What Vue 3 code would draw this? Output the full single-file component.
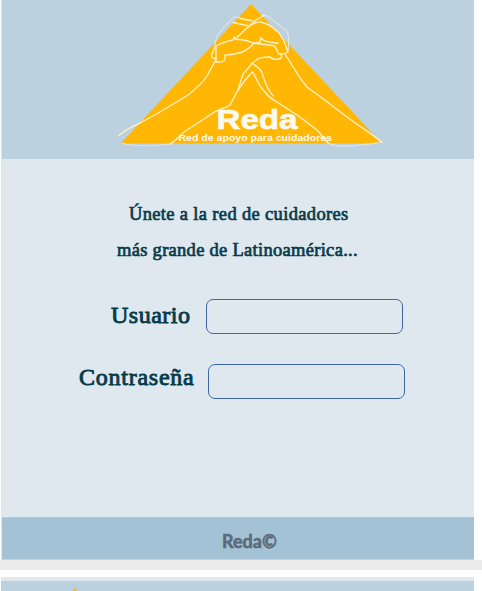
<script setup>
import { ref } from 'vue'

const username = ref('')
const password = ref('')
</script>

<template>
  <div class="page">
    <main class="card">
      <header class="header">
        <svg class="logo" viewBox="116 0 270 150" role="img" aria-label="Reda">
          <path class="peak" d="M251 4 L382 143.5 H120.5 Z" />
          <g class="outline">
            <path class="edge" d="M214.5 46 L217 36 L221 31 L226 25 L233 18 Q236 16 241 18.5 L246 20 M262 15.5 Q266 14 270 18 L283 28 Q289 32 288.5 38 L288.5 50" />
            <path class="edge" d="M122 143 C133 147 156 146 170 144" />
            <path class="edge" d="M328 143 C339 149 360 145 382 142.4" />
            <path d="M119 135.7 C122 131 132 127 140 123 L160 112 L188 95 Q202 84 207 76 L215.7 60" />
            <path d="M170 144 C178 140 180 134 187 130 L210 115 C219 108 225 109 230 105 L238 90 L243 74 L251.7 64 Q257 58 262 57.5 L270 57" />
            <path d="M238 90 L246 79 L252.7 71.7 C257 80 260 88 265 92 C269 98 272 99 277 102 L297 115 L317 130 L328 143" />
            <path d="M251.7 63 C256 66 260 68 261 71 C265 79 265 88 273.5 96" />
            <path d="M382 142.4 C371 133 360 127 347 117 L322 98 L307 87 Q300 79 295 70 L285 54" />
            <path d="M233 22.5 L248 25.7 M240 18.5 L252 20.7" />
            <path d="M235 39 L247 28 L256 20 L264 15.3 M247 28 Q256 21 261 22 Q268 24 272 27 L279 33 L284 41 L288 52 Q284 55 278 53.5 Q276 46 273 45.5 L254 43.3" />
            <path d="M216 46 Q223 42 233 40 L234 37 L236 39.5 Q245 39 254 43.3 Q248 50 241 52.5 Q231 55 225 55 Q226 62 221 62 L216 62 Z" />
            <path d="M215 47 L211.5 55 Q211 59 216 58" />
            <path d="M254 43.3 L260 42.3 L261 37.5 Q263 41 267 41.5 L278 43.3 M281 54 Q283 59 278 59.3 Q272 59.5 270 57" />
          </g>
          <text class="brand" x="216.5" y="129.3" textLength="81" lengthAdjust="spacingAndGlyphs">Reda</text>
          <text class="slogan" x="178.5" y="140.8" textLength="153.5" lengthAdjust="spacingAndGlyphs">Red de apoyo para cuidadores</text>
        </svg>
      </header>

      <section class="content">
        <p class="intro">
          <span class="line first">Únete a la red de cuidadores</span>
          <span class="line second">más grande de Latinoamérica...</span>
        </p>
        <form class="form" @submit.prevent>
          <div class="row user">
            <label for="user">Usuario</label>
            <input id="user" v-model="username" type="text" />
          </div>
          <div class="row pass">
            <label for="pass">Contraseña</label>
            <input id="pass" v-model="password" type="password" />
          </div>
        </form>
      </section>

      <footer class="footer">Reda©</footer>
    </main>

    <div class="divider"></div>

    <section class="next">
      <div class="next-header">
        <svg class="tip" viewBox="0 0 6 3"><path d="M3 0 L6 3 H0 Z" /></svg>
      </div>
    </section>
  </div>
</template>

<style>
body {
  margin: 0;
  background: #fff;
  overflow: hidden;
}
</style>

<style scoped>
.page {
  display: flex;
  flex-direction: column;
  width: 482px;
  height: 591px;
  overflow: hidden;
  background: #fff;
}
.card {
  box-sizing: border-box;
  width: 473px;
  height: 560px;
  margin-left: 1px;
  border-left: 1px solid #d9e4ec;
  display: flex;
  flex-direction: column;
}
.header {
  height: 159px;
  background: #bcd1df;
}
.logo {
  display: block;
  width: 270px;
  height: 150px;
  margin-left: 114px;
}
.peak {
  fill: #ffb703;
}
.outline path {
  fill: none;
  stroke: #fff0c8;
  stroke-width: 1.4;
  stroke-linejoin: round;
  stroke-linecap: round;
}
.outline .edge {
  stroke: #e1e3df;
  stroke-width: 1.1;
}
.brand,
.slogan {
  fill: #fffaf0;
  font-family: "Liberation Sans", sans-serif;
  font-weight: 700;
}
.brand {
  font-size: 28px;
  stroke: #fffaf0;
  stroke-width: 0.7;
}
.slogan {
  font-size: 9.5px;
}
.content {
  height: 358px;
  box-sizing: border-box;
  padding-top: 37px;
  background: #e0e8ef;
  color: #073b4c;
  font-family: "Liberation Serif", serif;
}
.intro {
  margin: 0;
  font-size: 18.5px;
  line-height: 36px;
  -webkit-text-stroke: 0.7px #073b4c;
}
.line {
  display: block;
  white-space: nowrap;
}
.first {
  padding-left: 127px;
  letter-spacing: 0.34px;
}
.second {
  padding-left: 115px;
  letter-spacing: 0.29px;
}
.form {
  display: flex;
  flex-direction: column;
  gap: 29px;
  padding-top: 31px;
}
.row {
  display: flex;
  height: 35px;
  align-items: center;
}
.row label {
  font-size: 24px;
  line-height: 30px;
  white-space: nowrap;
  -webkit-text-stroke: 0.9px #073b4c;
}
.user label {
  width: 95px;
  padding: 0 0 3px 109px;
  letter-spacing: 0.5px;
}
.pass label {
  width: 129px;
  padding: 0 0 7px 77px;
  letter-spacing: 0.75px;
}
.row input {
  box-sizing: border-box;
  width: 197px;
  height: 35px;
  border: 1px solid #3f66a3;
  border-radius: 7px;
  background: transparent;
  outline: none;
}
.pass input {
  margin-top: 1px;
}
.footer {
  box-sizing: border-box;
  height: 43px;
  border-top: 1px solid #b2cbdb;
  border-bottom: 1px solid #bed4e1;
  background: #a4c2d6;
  padding-left: 220px;
  color: #5c6b7a;
  font: 700 18px/47px Lato, sans-serif;
  -webkit-text-stroke: 0.6px #5c6b7a;
}
.divider {
  height: 10px;
  background: #ebebeb;
}
.next {
  width: 473px;
  margin: 7px 0 0 1px;
  padding-top: 4px;
  background: #e0e8ef;
}
.next-header {
  height: 10px;
  box-sizing: border-box;
  padding: 7px 0 0 71px;
  background: #bcd1df;
}
.tip {
  display: block;
  width: 6px;
  height: 3px;
  fill: #dfba58;
}
</style>
